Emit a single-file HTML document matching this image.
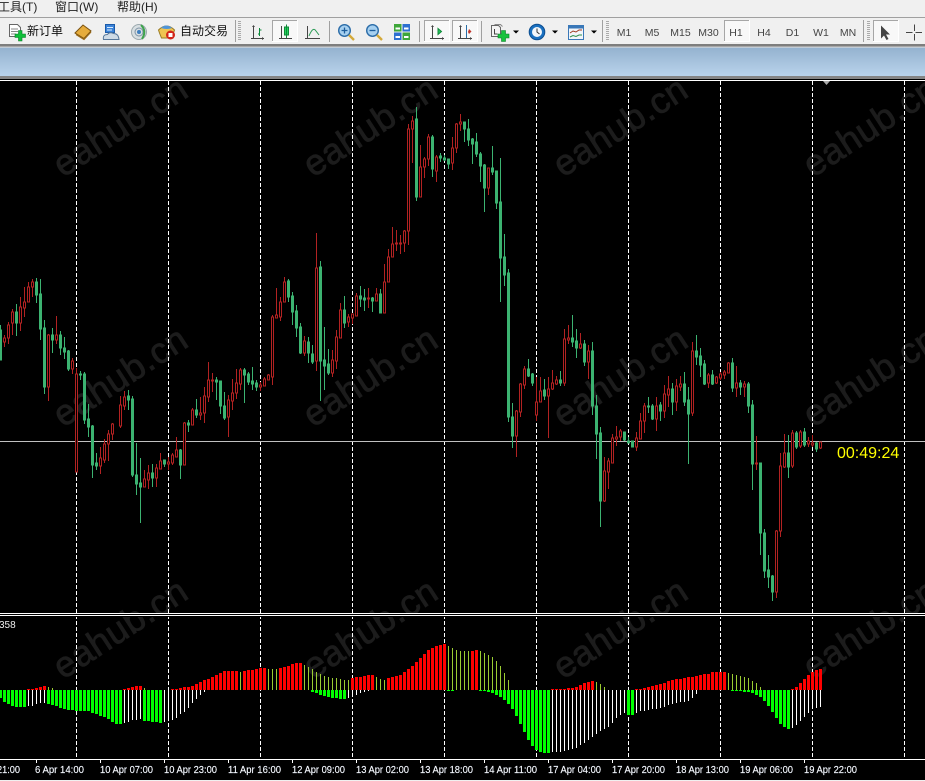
<!DOCTYPE html>
<html><head><meta charset="utf-8"><title>MT4</title>
<style>
html,body{margin:0;padding:0;background:#000;width:925px;height:781px;overflow:hidden}
svg{display:block;position:absolute;left:0;top:0}
.m{font:12px "Liberation Sans","Noto Sans CJK SC",sans-serif;fill:#222}
.t{font:12px "Liberation Sans","Noto Sans CJK SC",sans-serif;fill:#111}
.f{font:10.5px "Liberation Sans",sans-serif;fill:#444;text-anchor:middle}
.x{font:10.5px "Liberation Sans",sans-serif;fill:#fff;stroke:#dfeaff;stroke-width:.15}
.w{font:36px "Liberation Sans",sans-serif;fill:#1c1c1c;stroke:#1c1c1c;stroke-width:.8;letter-spacing:.5px}
</style></head><body>
<svg width="925" height="781" viewBox="0 0 925 781" xmlns="http://www.w3.org/2000/svg">
<defs><linearGradient id="b" x1="0" y1="0" x2="0" y2="1"><stop offset="0" stop-color="#94b2cf"/><stop offset="1" stop-color="#b9d3eb"/></linearGradient><clipPath id="c"><rect x="0" y="81" width="925" height="678"/></clipPath></defs>
<rect width="925" height="781" fill="#000"/>
<rect width="925" height="44" fill="#f0f0f0"/>
<rect y="17" width="925" height="1" fill="#a0a0a0"/>
<rect y="44" width="925" height="2.6" fill="#7e7e7e"/>
<rect y="46.6" width="925" height="1" fill="#fff"/>
<rect y="47.6" width="925" height="28.4" fill="url(#b)"/>
<rect y="76" width="925" height="3" fill="#858585"/>
<rect y="80" width="925" height="1" fill="#fff"/>
<text class="m" x="-2" y="11">工具(T)</text><text class="m" x="55" y="11">窗口(W)</text><text class="m" x="117" y="11">帮助(H)</text>
<text class="t" x="27" y="35">新订单</text><text class="t" x="180" y="35">自动交易</text>
<!-- new order -->
<path d="M9.5 24.5h8l3 3v9h-11z" fill="#fff" stroke="#666"/><path d="M11 29h7M11 31.5h7M11 34h5" stroke="#888"/><path d="M15 34h3.5v-3.5h3.5V34h3.5v3.500h-3.5V41h-3.500v-3.500H15z" fill="#0fc03a" stroke="#0a7a28" stroke-width=".6"/>
<!-- book -->
<path d="M75 33l8-8 8 6-7 7.500z" fill="#e6ac3c" stroke="#7a5210"/><path d="M76 34.500l8 5 7-7.500" fill="none" stroke="#9a6a18" stroke-width="1.200"/>
<!-- cloud/user -->
<rect x="105.5" y="24.5" width="9" height="8" fill="#3b83d9" stroke="#1b5aa8"/><path d="M107 27.500h6M107 30h5" stroke="#d8ecff"/><path d="M103.500 39.500q-1-5 4-5q2-3 6-1q5 0 5.500 6z" fill="#cfdbe6" stroke="#57779a"/>
<!-- radar -->
<circle cx="139" cy="32" r="7.5" fill="#d8dfe2" stroke="#9aa8ad"/><circle cx="139" cy="32" r="4" fill="none" stroke="#7e93a5"/><circle cx="139" cy="32" r="2" fill="#3e7fc0"/><path d="M141 25q6 6 1 14" stroke="#3fa34d" stroke-width="2" fill="none"/>
<!-- auto trade -->
<path d="M158.5 30q8-8 16 0l-1 3-1 5h-11l-2-5z" fill="#efc452" stroke="#9a7d26"/><path d="M161 28q5-5 11 0q-5 2-11 0z" fill="#4f94d8"/><circle cx="170.5" cy="35" r="4.5" fill="#d3261b"/><rect x="168.5" y="33" width="4" height="4" fill="#fff"/>
<!-- separators and grips -->
<g fill="#a0a0a0"><rect x="235" y="20" width="1" height="22"/><rect x="329" y="21" width="1" height="21"/><rect x="419" y="21" width="1" height="21"/><rect x="481" y="21" width="1" height="21"/><rect x="602" y="20" width="1" height="22"/><rect x="863" y="20" width="1" height="22"/></g>
<path d="M238 21.5h3M238 23.5h3M238 25.5h3M238 27.5h3M238 29.5h3M238 31.5h3M238 33.5h3M238 35.5h3M238 37.5h3M238 39.5h3M606 21.5h3M606 23.5h3M606 25.5h3M606 27.5h3M606 29.5h3M606 31.5h3M606 33.5h3M606 35.5h3M606 37.5h3M606 39.5h3M867 21.5h3M867 23.5h3M867 25.5h3M867 27.5h3M867 29.5h3M867 31.5h3M867 33.5h3M867 35.5h3M867 37.5h3M867 39.5h3" stroke="#aaa"/>
<!-- pressed buttons -->
<g fill="#f8f8f8" stroke="#fff"><rect x="272.5" y="20.5" width="25" height="21"/><rect x="424.5" y="20.5" width="25" height="21"/><rect x="452.5" y="20.5" width="25" height="21"/><rect x="724.5" y="20.5" width="25" height="21"/><rect x="873.5" y="20.5" width="25" height="21"/></g>
<path d="M272.5 41V20.5H297M424.5 41V20.5H449M452.5 41V20.5H477M724.5 41V20.5H749M873.5 41V20.5H898" fill="none" stroke="#a6a6a6"/>
<!-- chart icons -->
<path d="M253.5 26v12.5H264M251 38.5h13" stroke="#444" fill="none"/><path d="M253.5 25l-1.5 2h3zM264 38.5l-2-1.5v3z" fill="#444"/><path d="M259.5 28v8M258 34h1.5M259.5 30h2" stroke="#0a8a3a" fill="none"/>
<path d="M281.5 26v12.5H292M279 38.5h13" stroke="#444" fill="none"/><rect x="284.5" y="27" width="4" height="8" fill="#22d45c" stroke="#118a3a"/><path d="M286.5 24.5V38" stroke="#118a3a"/>
<path d="M307.5 26v12.5H320M305 38.5h15" stroke="#444" fill="none"/><path d="M309 36q4-10 7-5l3 4" stroke="#2b9b55" fill="none"/>
<!-- zoom -->
<circle cx="344.5" cy="30.5" r="5.8" fill="#a6d0f0" stroke="#2b6ca8" stroke-width="1.4"/><path d="M341.5 30.5h6M344.5 27.5v6" stroke="#1d5e9c" stroke-width="1.3"/><path d="M349 35l5 5" stroke="#d4a93a" stroke-width="2.4"/>
<circle cx="372.5" cy="30.5" r="5.8" fill="#a6d0f0" stroke="#2b6ca8" stroke-width="1.4"/><path d="M369.5 30.5h6" stroke="#1d5e9c" stroke-width="1.3"/><path d="M377 35l5 5" stroke="#d4a93a" stroke-width="2.4"/>
<!-- tile icon -->
<rect x="394" y="24" width="7.5" height="7.5" fill="#3ea639"/><rect x="402.5" y="24" width="7.5" height="7.5" fill="#2d6fd0"/><rect x="394" y="32.5" width="7.5" height="7.5" fill="#2d6fd0"/><rect x="402.5" y="32.5" width="7.5" height="7.5" fill="#3ea639"/><path d="M395.5 27.5h4.5v2h-4.5zM404 27.5h4.5v2h-4.5zM395.5 36h4.5v2h-4.5zM404 36h4.5v2h-4.5z" fill="#fff"/>
<!-- shift icons -->
<path d="M432.5 26v12.5H444M430 38.5h14" stroke="#444" fill="none"/><path d="M432.5 25l-1.5 2h3zM444 38.5l-2-1.5v3z" fill="#444"/><path d="M438 28.5l3.5 3-3.5 3z" fill="#22c45c" stroke="#118a3a"/>
<path d="M460.5 26v12.5H472M458 38.5h14" stroke="#444" fill="none"/><path d="M460.5 25l-1.5 2h3zM472 38.5l-2-1.5v3z" fill="#444"/><path d="M466.5 25v13" stroke="#2a6fa8"/><path d="M469 29l2.5 2.5-2.5 2.5-1-2z" fill="#c0352a"/>
<!-- new chart -->
<path d="M491.5 25.5h7l2 2v9h-9z" fill="#f4f4f4" stroke="#666"/><path d="M494.5 24.5h6l2 2" fill="none" stroke="#888"/><path d="M494.5 29v5h3" stroke="#444" fill="none"/><path d="M498 34h3.5v-3.500h4V34h3.500v4h-3.500v3.500h-4V38H498z" fill="#19c23e" stroke="#0b7d28" stroke-width=".6"/>
<path d="M513 30.5h6l-3 3zM552 30.5h6l-3 3zM591 30.5h6l-3 3z" fill="#000"/>
<!-- clock -->
<circle cx="537" cy="32" r="7.8" fill="#1a70c0" stroke="#0d4e90"/><circle cx="537" cy="32" r="5" fill="#f3f7fb"/><path d="M537 28.5V32l2.5 2" stroke="#333" fill="none"/>
<!-- template -->
<rect x="568.5" y="25.5" width="15" height="14" fill="#f2f6fa" stroke="#3a78b8"/><rect x="568.5" y="25.5" width="15" height="3" fill="#3a78b8"/><path d="M570 33l3-2 3 1 3-2 3 0" stroke="#a03b22" fill="none"/><path d="M570 37l3-1.5 3 1 3-1.5 3 0" stroke="#2f8f4b" fill="none"/>
<!-- timeframe labels -->
<text class="f" x="624" y="36">M1</text><text class="f" x="652" y="36">M5</text><text class="f" x="680.5" y="36">M15</text><text class="f" x="708.5" y="36">M30</text><text class="f" x="736" y="36">H1</text><text class="f" x="764" y="36">H4</text><text class="f" x="792.5" y="36">D1</text><text class="f" x="821" y="36">W1</text><text class="f" x="848" y="36">MN</text>
<!-- arrow, crosshair -->
<path d="M881 25.5v13l3-3 2.5 4.500 2-1-2.500-4.500h4z" fill="#444"/>
<path d="M906 32.5h6.500M915.5 32.5H922M914.5 24.5V31M914.5 34v6.500" stroke="#444" fill="none"/>
<!-- chart -->
<path d="M823 81h7l-3.5 4z" fill="#aaa"/>
<g class="w" clip-path="url(#c)">
<text transform="translate(63 178) rotate(-33)">eahub.cn</text><text transform="translate(313 178) rotate(-33)">eahub.cn</text><text transform="translate(563 178) rotate(-33)">eahub.cn</text><text transform="translate(813 178) rotate(-33)">eahub.cn</text>
<text transform="translate(63 428) rotate(-33)">eahub.cn</text><text transform="translate(313 428) rotate(-33)">eahub.cn</text><text transform="translate(563 428) rotate(-33)">eahub.cn</text><text transform="translate(813 428) rotate(-33)">eahub.cn</text>
<text transform="translate(63 680) rotate(-33)">eahub.cn</text><text transform="translate(313 680) rotate(-33)">eahub.cn</text><text transform="translate(563 680) rotate(-33)">eahub.cn</text><text transform="translate(813 680) rotate(-33)">eahub.cn</text>
</g>
<path d="M76.5 81V758M168.5 81V758M260.5 81V758M352.5 81V758M444.5 81V758M536.5 81V758M628.5 81V758M720.5 81V758M812.5 81V758M904.5 81V758" stroke="#fff" stroke-dasharray="4 2" fill="none"/>
<rect y="441" width="925" height="1" fill="#c0c0c0"/>
<!-- green candles -->
<path fill="#3cb371" stroke="#3cb371" d="M.5 325V360M-.5 330h2v30h-2zM16.5 304V336M15.5 312h2v11h-2zM36.5 278V303M35.5 282h2v13h-2zM40.5 279V340M39.5 294h2v35h-2zM44.5 320V394M43.5 328h2v59h-2zM52.5 328V353M51.5 335h2v5h-2zM60.5 331V355M59.5 335h2v13h-2zM64.5 337V359M63.5 348h2v4h-2zM68.5 350V371M67.5 351h2v18h-2zM80.5 371V380M79.5 374h2v1h-2zM84.5 372V424M83.5 374h2v46h-2zM88.5 404V437M87.5 419h2v8h-2zM92.5 425V478M91.5 426h2v39h-2zM96.5 453V470M95.5 463h2v3h-2zM128.5 390V410M127.5 396h2v4h-2zM132.5 396V477M131.5 399h2v76h-2zM136.5 443V495M135.5 475h2v9h-2zM140.5 458V523M139.5 483h2v4h-2zM152.5 464V487M151.5 473h2v5h-2zM164.5 460V467M163.5 460h2v4h-2zM180.5 449V479M179.5 450h2v15h-2zM188.5 420V432M187.5 423h2v2h-2zM196.5 399V418M195.5 410h2v5h-2zM216.5 377V400M215.5 380h2v2h-2zM220.5 381V414M219.5 381h2v25h-2zM224.5 392V420M223.5 406h2v12h-2zM244.5 368V403M243.5 370h2v5h-2zM248.5 372V385M247.5 374h2v8h-2zM252.5 367V390M251.5 381h2v3h-2zM256.5 380V391M255.5 383h2v4h-2zM288.5 279V302M287.5 281h2v16h-2zM292.5 292V325M291.5 296h2v16h-2zM296.5 305V337M295.5 311h2v17h-2zM300.5 323V354M299.5 327h2v26h-2zM308.5 337V363M307.5 342h2v11h-2zM312.5 345V364M311.5 354h2v8h-2zM320.5 261V401M319.5 267h2v94h-2zM324.5 327V390M323.5 360h2v6h-2zM328.5 349V375M327.5 364h2v9h-2zM344.5 296V328M343.5 310h2v13h-2zM360.5 286V307M359.5 296h2v3h-2zM364.5 289V311M363.5 298h2v2h-2zM372.5 297V312M371.5 298h2v3h-2zM380.5 289V313M379.5 294h2v19h-2zM416.5 107V201M415.5 119h2v78h-2zM432.5 135V177M431.5 137h2v32h-2zM440.5 153V162M439.5 156h2v2h-2zM444.5 155V161M443.5 158h2v2h-2zM448.5 159V169M447.5 159h2v5h-2zM464.5 122V142M463.5 122h2v7h-2zM468.5 119V146M467.5 129h2v11h-2zM472.5 138V164M471.5 139h2v5h-2zM476.5 133V157M475.5 142h2v12h-2zM480.5 152V182M479.5 154h2v12h-2zM484.5 164V212M483.5 165h2v23h-2zM492.5 146V175M491.5 168h2v4h-2zM496.5 171V209M495.5 171h2v32h-2zM500.5 158V302M499.5 202h2v56h-2zM504.5 234V286M503.5 257h2v18h-2zM508.5 269V422M507.5 273h2v144h-2zM512.5 403V448M511.5 417h2v19h-2zM528.5 359V377M527.5 369h2v7h-2zM532.5 373V386M531.5 374h2v9h-2zM544.5 379V400M543.5 390h2v6h-2zM560.5 371V386M559.5 380h2v3h-2zM572.5 315V347M571.5 338h2v4h-2zM576.5 329V358M575.5 341h2v7h-2zM584.5 340V366M583.5 344h2v18h-2zM592.5 342V415M591.5 351h2v55h-2zM596.5 395V459M595.5 406h2v28h-2zM600.5 427V527M599.5 433h2v68h-2zM624.5 432V441M623.5 432h2v8h-2zM628.5 437V443M627.5 441h2v2h-2zM632.5 441V447M631.5 441h2v6h-2zM648.5 397V413M647.5 406h2v1h-2zM652.5 404V420M651.5 406h2v13h-2zM660.5 402V421M659.5 405h2v6h-2zM672.5 383V415M671.5 389h2v13h-2zM684.5 372V406M683.5 384h2v18h-2zM688.5 387V464M687.5 400h2v14h-2zM696.5 335V365M695.5 351h2v6h-2zM700.5 348V377M699.5 356h2v9h-2zM704.5 360V385M703.5 364h2v20h-2zM712.5 370V385M711.5 375h2v9h-2zM732.5 358V392M731.5 363h2v25h-2zM740.5 380V395M739.5 383h2v4h-2zM748.5 382V413M747.5 384h2v22h-2zM752.5 400V490M751.5 405h2v59h-2zM760.5 463V555M759.5 463h2v70h-2zM764.5 529V578M763.5 533h2v38h-2zM768.5 555V588M767.5 570h2v7h-2zM772.5 575V601M771.5 576h2v16h-2zM788.5 435V478M787.5 453h2v14h-2zM796.5 431V449M795.5 433h2v14h-2zM804.5 428V447M803.5 432h2v13h-2zM816.5 442V452M815.5 443h2v6h-2z"/>
<!-- red candles -->
<path fill="#000" stroke="#b22222" d="M4.5 335V338h-1v4h2v-4h-1M4.5 342V347M8.5 322V325h-1v13h2v-13h-1M8.5 338V344M12.5 309V312h-1v11h2v-11h-1M12.5 323V335M20.5 297V307h-1v16h2v-16h-1M20.5 323V331M24.5 287V302h-1v6h2v-6h-1M24.5 308V317M28.5 282V287h-1v15h2v-15h-1M32.5 279V282h-1v5h2v-5h-1M32.5 287V297M48.5 334V335h-1v52h2v-52h-1M48.5 387V401M56.5 316V335h-1v5h2v-5h-1M56.5 340V344M72.5 358V361h-1v8h2v-8h-1M72.5 369V374M76.5 368V374h-1v98h2v-98h-1M100.5 447V458h-1v8h2v-8h-1M100.5 466V474M104.5 439V444h-1v16h2v-16h-1M104.5 460V463M108.5 430V434h-1v10h2v-10h-1M108.5 444V461M112.5 423V424h-1v10h2v-10h-1M112.5 434V440M120.5 396V405h-1v21h2v-21h-1M120.5 426V428M124.5 391V397h-1v9h2v-9h-1M124.5 406V410M144.5 470V479h-1v8h2v-8h-1M148.5 465V473h-1v7h2v-7h-1M148.5 480V489M156.5 464V468h-1v10h2v-10h-1M156.5 478V487M160.5 453V461h-1v8h2v-8h-1M168.5 457V462h-1v2h2v-2h-1M168.5 464V470M172.5 453V455h-1v8h2v-8h-1M172.5 463V465M176.5 437V450h-1v7h2v-7h-1M184.5 422V423h-1v42h2v-42h-1M192.5 408V410h-1v15h2v-15h-1M200.5 397V413h-1v2h2v-2h-1M200.5 415V420M204.5 387V396h-1v17h2v-17h-1M204.5 413V423M208.5 362V380h-1v17h2v-17h-1M208.5 397V402M212.5 373V380h-1v1h2v-1h-1M212.5 381V392M228.5 395V400h-1v17h2v-17h-1M228.5 417V437M232.5 379V393h-1v8h2v-8h-1M232.5 401V410M236.5 369V383h-1v10h2v-10h-1M236.5 393V399M240.5 368V370h-1v14h2v-14h-1M240.5 384V390M260.5 382V385h-1v2h2v-2h-1M260.5 387V391M264.5 377V379h-1v7h2v-7h-1M268.5 374V375h-1v5h2v-5h-1M272.5 315V317h-1v60h2v-60h-1M272.5 377V385M276.5 288V315h-1v3h2v-3h-1M280.5 297V302h-1v15h2v-15h-1M280.5 317V321M284.5 277V282h-1v20h2v-20h-1M304.5 336V341h-1v12h2v-12h-1M304.5 353V356M316.5 233V268h-1v93h2v-93h-1M316.5 361V371M332.5 350V360h-1v13h2v-13h-1M332.5 373V377M336.5 330V337h-1v24h2v-24h-1M336.5 361V369M340.5 303V310h-1v28h2v-28h-1M348.5 314V317h-1v5h2v-5h-1M348.5 322V327M352.5 314h-1v4h2v-4h-1M352.5 318V324M356.5 293V296h-1v20h2v-20h-1M368.5 288V298h-1v1h2v-1h-1M368.5 299V308M376.5 288V294h-1v7h2v-7h-1M384.5 264V282h-1v31h2v-31h-1M388.5 249V257h-1v25h2v-25h-1M392.5 227V244h-1v13h2v-13h-1M396.5 230V243h-1v1h2v-1h-1M396.5 244V251M400.5 235V243h-1v1h2v-1h-1M400.5 244V254M404.5 230V231h-1v12h2v-12h-1M404.5 243V252M408.5 124V129h-1v102h2v-102h-1M408.5 231V245M412.5 116V121h-1v8h2v-8h-1M412.5 129V163M420.5 145V167h-1v30h2v-30h-1M424.5 157V159h-1v8h2v-8h-1M424.5 167V178M428.5 134V137h-1v22h2v-22h-1M428.5 159V166M436.5 155V157h-1v14h2v-14h-1M436.5 171V182M452.5 137V148h-1v15h2v-15h-1M452.5 163V170M456.5 123V124h-1v24h2v-24h-1M456.5 148V153M460.5 114V122h-1v2h2v-2h-1M460.5 124V131M488.5 168h-1v20h2v-20h-1M488.5 188V195M516.5 410V411h-1v25h2v-25h-1M516.5 436V457M520.5 383V384h-1v28h2v-28h-1M520.5 412V417M524.5 366V369h-1v16h2v-16h-1M524.5 385V389M536.5 377V402h-1v13h2v-13h-1M536.5 415V421M540.5 377V391h-1v11h2v-11h-1M548.5 377V389h-1v7h2v-7h-1M548.5 396V438M552.5 370V383h-1v6h2v-6h-1M552.5 389V390M556.5 376V380h-1v4h2v-4h-1M556.5 384V385M564.5 329V339h-1v44h2v-44h-1M564.5 383V386M568.5 325V338h-1v2h2v-2h-1M568.5 340V344M580.5 333V344h-1v4h2v-4h-1M580.5 348V349M588.5 345V351h-1v11h2v-11h-1M588.5 362V379M604.5 457V471h-1v30h2v-30h-1M604.5 501V502M608.5 458V461h-1v11h2v-11h-1M608.5 472V489M612.5 434V438h-1v25h2v-25h-1M616.5 426V437h-1v2h2v-2h-1M616.5 439V446M620.5 429V431h-1v6h2v-6h-1M620.5 437V441M636.5 432V438h-1v9h2v-9h-1M636.5 447V451M640.5 413V421h-1v18h2v-18h-1M644.5 403V406h-1v15h2v-15h-1M644.5 421V433M656.5 397V406h-1v13h2v-13h-1M656.5 419V431M664.5 385V394h-1v17h2v-17h-1M664.5 411V418M668.5 376V389h-1v6h2v-6h-1M668.5 395V407M676.5 379V386h-1v16h2v-16h-1M676.5 402V411M680.5 376V384h-1v3h2v-3h-1M680.5 387V391M692.5 342V351h-1v62h2v-62h-1M692.5 413V416M708.5 373V375h-1v8h2v-8h-1M708.5 383V388M716.5 376V377h-1v6h2v-6h-1M716.5 383V384M720.5 372V374h-1v4h2v-4h-1M720.5 378V380M724.5 370V372h-1v3h2v-3h-1M724.5 375V379M728.5 362V363h-1v10h2v-10h-1M736.5 366V383h-1v5h2v-5h-1M736.5 388V397M744.5 381V384h-1v3h2v-3h-1M744.5 387V397M756.5 436V463h-1v1h2v-1h-1M756.5 464V470M776.5 530V531h-1v61h2v-61h-1M776.5 592V598M780.5 453V466h-1v65h2v-65h-1M780.5 531V537M784.5 434V453h-1v14h2v-14h-1M784.5 467V468M792.5 430V433h-1v33h2v-33h-1M792.5 466V468M800.5 430V432h-1v14h2v-14h-1M800.5 446V448M808.5 437V441h-1v3h2v-3h-1M808.5 444V447M812.5 435V443h-1v2h2v-2h-1M812.5 445V447M820.5 442h-1v6h2v-6h-1M820.5 448V449"/>
<text x="837" y="458" font-family="Liberation Sans,sans-serif" font-size="16" fill="#ffff00">00:49:24</text>
<!-- separators -->
<rect y="613" width="925" height="1" fill="#fff"/><rect y="615" width="925" height="1" fill="#fff"/>
<rect y="614" width="925" height="1" fill="#000"/><rect y="616" width="925" height="1" fill="#000"/>
<text x="-1" y="628" font-family="Liberation Sans,sans-serif" font-size="10" fill="#eee">358</text>
<!-- thick green down -->
<path fill="none" stroke="#00ff00" stroke-width="3" d="M.5 690v8M4.5 690v12M8.5 690v14M12.5 690v16M16.5 690v17M20.5 690v17M24.5 690v17M48.5 690v14M52.5 690v15M56.5 690v16M60.5 690v18M64.5 690v19M68.5 690v20M72.5 690v20M76.5 690v21M80.5 690v21M84.5 690v21M88.5 690v21M92.5 690v23M96.5 690v24M100.5 690v26M104.5 690v27M108.5 690v29M112.5 690v32M116.5 690v34M120.5 690v34M144.5 690v31M148.5 690v31M152.5 690v32M156.5 690v32M160.5 690v33M312.5 690v2M316.5 690v3M320.5 690v5M324.5 690v6M328.5 690v7M332.5 690v8M336.5 690v8M340.5 690v9M344.5 690v9M448.5 690v1M452.5 690v1M480.5 690v1M484.5 690v1M488.5 690v2M492.5 690v3M496.5 690v5M500.5 690v7M504.5 690v10M508.5 690v14M512.5 690v19M516.5 690v26M520.5 690v34M524.5 690v42M528.5 690v50M532.5 690v56M536.5 690v60M540.5 690v62M544.5 690v63M548.5 690v63M628.5 690v25M632.5 690v25M732.5 690v1M736.5 690v1M740.5 690v1M744.5 690v2M748.5 690v2M752.5 690v3M756.5 690v5M760.5 690v7M764.5 690v11M768.5 690v16M772.5 690v22M776.5 690v28M780.5 690v34M784.5 690v37M788.5 690v39"/>
<!-- thin white down -->
<path fill="none" stroke="#fff" d="M28.5 690v16M32.5 690v16M36.5 690v14M40.5 690v13M44.5 690v13M124.5 690v33M128.5 690v32M132.5 690v30M136.5 690v30M140.5 690v29M164.5 690v32M168.5 690v31M172.5 690v30M176.5 690v28M180.5 690v24M184.5 690v22M188.5 690v18M192.5 690v13M196.5 690v9M200.5 690v5M204.5 690v2M348.5 690v8M352.5 690v6M356.5 690v5M360.5 690v3M364.5 690v2M368.5 690v1M552.5 690v62M556.5 690v62M560.5 690v62M564.5 690v61M568.5 690v60M572.5 690v59M576.5 690v58M580.5 690v55M584.5 690v53M588.5 690v50M592.5 690v47M596.5 690v44M600.5 690v41M604.5 690v39M608.5 690v37M612.5 690v33M616.5 690v28M620.5 690v25M624.5 690v23M636.5 690v23M640.5 690v21M644.5 690v21M648.5 690v20M652.5 690v19M656.5 690v19M660.5 690v18M664.5 690v17M668.5 690v15M672.5 690v14M676.5 690v13M680.5 690v12M684.5 690v12M688.5 690v11M692.5 690v8M696.5 690v4M792.5 690v38M796.5 690v35M800.5 690v31M804.5 690v27M808.5 690v23M812.5 690v18M816.5 690v18M820.5 690v17"/>
<!-- thick red up -->
<path fill="none" stroke="#ff0000" stroke-width="3" d="M28.5 690v-1M32.5 690v-1M36.5 690v-2M40.5 690v-3M44.5 690v-4M124.5 690v-1M128.5 690v-2M132.5 690v-3M136.5 690v-4M140.5 690v-4M172.5 690v-1M176.5 690v-1M180.5 690v-2M184.5 690v-3M188.5 690v-3M192.5 690v-4M196.5 690v-6M200.5 690v-8M204.5 690v-10M208.5 690v-11M212.5 690v-13M216.5 690v-15M220.5 690v-17M224.5 690v-19M228.5 690v-19M232.5 690v-19M236.5 690v-19M244.5 690v-19M248.5 690v-20M252.5 690v-20M256.5 690v-21M260.5 690v-22M264.5 690v-22M280.5 690v-22M284.5 690v-23M288.5 690v-24M292.5 690v-26M296.5 690v-27M300.5 690v-27M352.5 690v-12M356.5 690v-13M360.5 690v-13M364.5 690v-14M368.5 690v-15M372.5 690v-15M388.5 690v-12M392.5 690v-13M396.5 690v-14M400.5 690v-15M404.5 690v-18M408.5 690v-21M412.5 690v-24M416.5 690v-28M420.5 690v-32M424.5 690v-36M428.5 690v-40M432.5 690v-42M436.5 690v-44M440.5 690v-45M444.5 690v-46M472.5 690v-39M476.5 690v-40M552.5 690v-1M556.5 690v-1M560.5 690v-1M564.5 690v-1M568.5 690v-2M572.5 690v-2M576.5 690v-3M580.5 690v-5M584.5 690v-7M588.5 690v-8M592.5 690v-9M636.5 690v-1M640.5 690v-1M644.5 690v-2M648.5 690v-3M652.5 690v-4M656.5 690v-5M660.5 690v-6M664.5 690v-7M668.5 690v-9M672.5 690v-10M676.5 690v-11M680.5 690v-11M684.5 690v-12M688.5 690v-13M692.5 690v-13M696.5 690v-14M700.5 690v-15M704.5 690v-16M708.5 690v-16M712.5 690v-18M716.5 690v-18M720.5 690v-18M724.5 690v-18M792.5 690v-1M796.5 690v-3M800.5 690v-7M804.5 690v-11M808.5 690v-15M812.5 690v-18M816.5 690v-20M820.5 690v-21"/>
<!-- thin olive up -->
<path fill="none" stroke="#9acd32" d="M48.5 690v-3M52.5 690v-2M144.5 690v-2M240.5 690v-18M268.5 690v-21M272.5 690v-21M276.5 690v-21M304.5 690v-25M308.5 690v-23M312.5 690v-21M316.5 690v-18M320.5 690v-16M324.5 690v-14M328.5 690v-13M332.5 690v-12M336.5 690v-12M340.5 690v-11M344.5 690v-10M348.5 690v-10M376.5 690v-13M380.5 690v-11M384.5 690v-10M448.5 690v-44M452.5 690v-42M456.5 690v-40M460.5 690v-39M464.5 690v-39M468.5 690v-39M480.5 690v-39M484.5 690v-37M488.5 690v-35M492.5 690v-33M496.5 690v-29M500.5 690v-24M504.5 690v-17M508.5 690v-10M596.5 690v-8M600.5 690v-6M604.5 690v-3M728.5 690v-17M732.5 690v-16M736.5 690v-15M740.5 690v-14M744.5 690v-13M748.5 690v-12M752.5 690v-9M756.5 690v-7M760.5 690v-3"/>
<!-- time axis -->
<rect y="759" width="925" height="1" fill="#fff"/>
<rect y="780" width="925" height="1" fill="#f0f0f0"/>
<path d="M36.5 760v3M100.5 760v3M164.5 760v3M228.5 760v3M292.5 760v3M356.5 760v3M420.5 760v3M484.5 760v3M548.5 760v3M612.5 760v3M676.5 760v3M740.5 760v3M804.5 760v3" stroke="#fff"/>
<text class="x" x="-3" y="773" textLength="23" lengthAdjust="spacingAndGlyphs">21:00</text>
<text class="x" x="35" y="773" textLength="49" lengthAdjust="spacingAndGlyphs">6 Apr 14:00</text>
<text class="x" x="100" y="773" textLength="53" lengthAdjust="spacingAndGlyphs">10 Apr 07:00</text>
<text class="x" x="164" y="773" textLength="53" lengthAdjust="spacingAndGlyphs">10 Apr 23:00</text>
<text class="x" x="228" y="773" textLength="53" lengthAdjust="spacingAndGlyphs">11 Apr 16:00</text>
<text class="x" x="292" y="773" textLength="53" lengthAdjust="spacingAndGlyphs">12 Apr 09:00</text>
<text class="x" x="356" y="773" textLength="53" lengthAdjust="spacingAndGlyphs">13 Apr 02:00</text>
<text class="x" x="420" y="773" textLength="53" lengthAdjust="spacingAndGlyphs">13 Apr 18:00</text>
<text class="x" x="484" y="773" textLength="53" lengthAdjust="spacingAndGlyphs">14 Apr 11:00</text>
<text class="x" x="548" y="773" textLength="53" lengthAdjust="spacingAndGlyphs">17 Apr 04:00</text>
<text class="x" x="612" y="773" textLength="53" lengthAdjust="spacingAndGlyphs">17 Apr 20:00</text>
<text class="x" x="676" y="773" textLength="53" lengthAdjust="spacingAndGlyphs">18 Apr 13:00</text>
<text class="x" x="740" y="773" textLength="53" lengthAdjust="spacingAndGlyphs">19 Apr 06:00</text>
<text class="x" x="804" y="773" textLength="53" lengthAdjust="spacingAndGlyphs">19 Apr 22:00</text>
</svg>
</body></html>
